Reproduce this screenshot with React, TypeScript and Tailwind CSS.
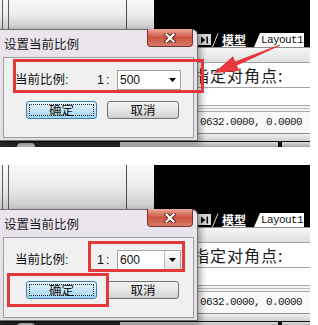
import React from "react";

const CJK = "font-['Noto_Sans_CJK_SC',sans-serif]";
const UI = "font-['Liberation_Sans','Noto_Sans_CJK_SC',sans-serif]";
const MONO = "font-['Liberation_Mono',monospace]";

function CloseButton() {
  return (
    <div className="flex h-[18px] w-[46px] items-center justify-center rounded-b-[4px] border border-t-0 border-[#7a3328] bg-linear-to-b from-[#e9a89a] via-[#cc5340] to-[#d67a68]">
      <svg width="12" height="10" viewBox="0 0 12 10">
        <path d="M2.5 1.5L9.5 8.5M9.5 1.5L2.5 8.5" stroke="#5a2018" strokeWidth="4" strokeLinecap="square" />
        <path d="M2.5 1.5L9.5 8.5M9.5 1.5L2.5 8.5" stroke="#ffffff" strokeWidth="2.2" strokeLinecap="square" />
      </svg>
    </div>
  );
}

function Combo({ value, button }: { value: string; button?: boolean }) {
  return (
    <div className="flex h-[20px] w-[64px] items-center border border-[#a3a3a3] bg-white">
      <span className={`flex-1 pl-[2px] text-[12px] text-[#111] ${UI}`}>{value}</span>
      <div
        className={
          button
            ? "flex h-full w-[16px] items-center justify-center border-l border-[#b4b4b4] bg-linear-to-b from-[#fbfbfb] to-[#e4e4e4]"
            : "flex h-full w-[16px] items-center justify-center"
        }
      >
        <svg width="7" height="4" viewBox="0 0 7 4">
          <path d="M0 0h7L3.5 4z" fill="#000" />
        </svg>
      </div>
    </div>
  );
}

function Dialog({ top, value, comboButton }: { top: string; value: string; comboButton?: boolean }) {
  return (
    <div
      className={`absolute left-0 ${top} flex h-[112px] w-[198px] flex-col rounded-tr-[6px] border-y border-r border-[#707070] bg-linear-to-b from-[#ebe5ee] to-[#e2dee6] shadow-[3px_3px_6px_rgba(0,0,0,0.35)]`}
    >
      {/* title bar */}
      <div className="flex h-[27px] items-start justify-between">
        <span className={`ml-[4px] mt-[5px] text-[12.5px] text-[#1a1a1a] ${CJK}`}>设置当前比例</span>
        <div className="mr-[4px] -mt-px">
          <CloseButton />
        </div>
      </div>

      {/* client area */}
      <div className="mx-[3px] mb-[2px] flex flex-1 flex-col border border-[#9e9e9e] bg-[#f0f0f0]">
        <div className={`mt-[12px] flex h-[20px] items-center text-[12.5px] text-[#111] ${UI}`}>
          <span className="w-[93px] pl-[11px]">当前比例:</span>
          <span className="w-[20px] tracking-[2px]">1:</span>
          <Combo value={value} button={comboButton} />
        </div>
        <div className={`mt-[11px] flex h-[18px] gap-[10px] pl-[22px] text-[12.5px] text-[#111] ${CJK}`}>
          <div className="flex w-[71px] rounded-[3px] border border-[#3c7fb1] bg-linear-to-b from-[#eaf6fd] via-[#c6e6f7] to-[#9dd3f0] p-[2px]">
            <div className="flex flex-1 items-center justify-center border border-dotted border-[#222]">确定</div>
          </div>
          <div className="flex w-[72px] items-center justify-center rounded-[3px] border border-[#707070] bg-linear-to-b from-[#f4f4f4] via-[#e6e6e6] to-[#d0d0d0]">
            取消
          </div>
        </div>
      </div>
    </div>
  );
}

function TabRow() {
  return (
    <div className="flex h-[17px] items-end bg-black pl-[44px]">
      <div className="mb-[2px] flex h-[11px] w-[13px] items-center justify-center bg-[#d6d6d6]">
        <svg width="9" height="8" viewBox="0 0 9 8">
          <path d="M1 0.5L5.5 4L1 7.5z" fill="#111" />
          <rect x="6.5" y="0.5" width="1.5" height="7" fill="#111" />
        </svg>
      </div>
      <div className="ml-px flex h-[14px] w-[42px] items-center">
        <svg width="8" height="14" viewBox="0 0 8 14">
          <path d="M0.5 14L6 0.5" stroke="#d8d8d8" strokeWidth="1" />
        </svg>
        <span className={`ml-[2px] border-b border-white text-[12px] leading-[13px] font-bold text-white ${CJK}`}>模型</span>
      </div>
      <div className="flex h-[14px] w-[50px] items-center bg-white pl-[7px] [clip-path:polygon(6px_0,100%_0,100%_100%,0_100%)]">
        <span className={`text-[11px] tracking-[-0.6px] text-[#111] ${MONO}`}>Layout1</span>
      </div>
    </div>
  );
}

function Panel({
  height,
  topH,
  dialogTop,
  value,
  comboButton,
  children,
}: {
  height: string;
  topH: string;
  dialogTop: string;
  value: string;
  comboButton?: boolean;
  children?: React.ReactNode;
}) {
  return (
    <div className={`relative ${height} w-[310px] shrink-0 overflow-hidden`}>
      <div className="flex h-full flex-col">
        <div className="flex flex-1">
          {/* left side of the app window */}
          <div className="flex w-[154px] flex-col">
            <div className={`flex ${topH} bg-linear-to-b from-[#f8f8f8] via-[#ececec] to-[#c4c4c4]`}>
              <div className="w-[2px]" />
              <div className="w-px bg-[#5a5a5a]" />
              <div className="w-[5px]" />
              <div className="w-px bg-[#5a5a5a]" />
              <div className="w-[117px]" />
              <div className="w-px bg-[#4a4a4a]" />
              <div className="flex-1" />
            </div>
            <div className="flex-1 bg-[#d8d8d8]" />
          </div>

          {/* drawing area + command line */}
          <div className="flex flex-1 flex-col">
            <div className={`${topH} bg-black`} />
            <TabRow />
            <div className="h-[15px] border-t border-[#8e8e8e] bg-linear-to-b from-[#f7f7f7] to-[#e0e0e0]" />
            <div className={`flex h-[26px] items-center border-y border-[#a3a3a3] bg-white pl-[39px] text-[16px] tracking-[1px] text-[#1c1c1c] ${CJK}`}>
              指定对角点:
            </div>
            <div className="h-[17px] bg-white" />
            <div className="flex h-[7px] flex-col justify-center border-y border-[#a8a8a8] bg-[#f4f4f4]">
              <div className="h-px bg-[#bcbcbc]" />
            </div>
            <div className={`flex h-[21px] items-center bg-[#f8f8f8] pl-[46px] text-[11px] tracking-[-0.6px] text-[#1a1a1a] ${MONO}`}>
              0632.0000, 0.0000
            </div>
            <div className="h-[8px] border-t border-[#8a8a8a] bg-linear-to-b from-[#f2f2f2] to-[#cfcfcf]" />
          </div>
        </div>

        {/* taskbar strip */}
        <div className="flex h-[6px] border-t border-[#111]">
          <div className="flex w-[120px] items-end bg-[#262626] pl-[17px]">
            <div className="h-[4px] w-[18px] rounded-t-full bg-[#bdbdbd]" />
          </div>
          <div className="flex flex-1 bg-linear-to-b from-[#dcdcdc] to-[#a8a8a8]">
            <div className="w-[158px]" />
            <div className="w-[4px] bg-[#111]" />
          </div>
        </div>
      </div>

      <Dialog top={dialogTop} value={value} comboButton={comboButton} />
      {children}
    </div>
  );
}

export default function App() {
  return (
    <div className="flex h-[325px] w-[318px] flex-col overflow-hidden bg-white">
      <Panel height="h-[147px]" topH="h-[30px]" dialogTop="top-[29px]" value="500">
        <div className="absolute left-[13px] top-[59px] h-[34px] w-[191px] border-[3px] border-[#e2393b]" />
        <svg className="absolute left-[205px] top-[38px]" width="80" height="40" viewBox="0 0 80 40">
          <polygon points="9,35 34.2,33 32,27.6 75.2,7.6 74.8,6.4 30.2,23.6 28,18.2" fill="#e8363a" />
        </svg>
      </Panel>
      <div className="h-[18px] shrink-0" />
      <Panel height="h-[162px]" topH="h-[45px]" dialogTop="top-[44px]" value="600" comboButton>
        <div className="absolute left-[88px] top-[76px] h-[31px] w-[97px] border-[3px] border-[#e2393b]" />
        <div className="absolute left-[7px] top-[108px] h-[34px] w-[102px] border-[3px] border-[#e2393b]" />
      </Panel>
    </div>
  );
}
